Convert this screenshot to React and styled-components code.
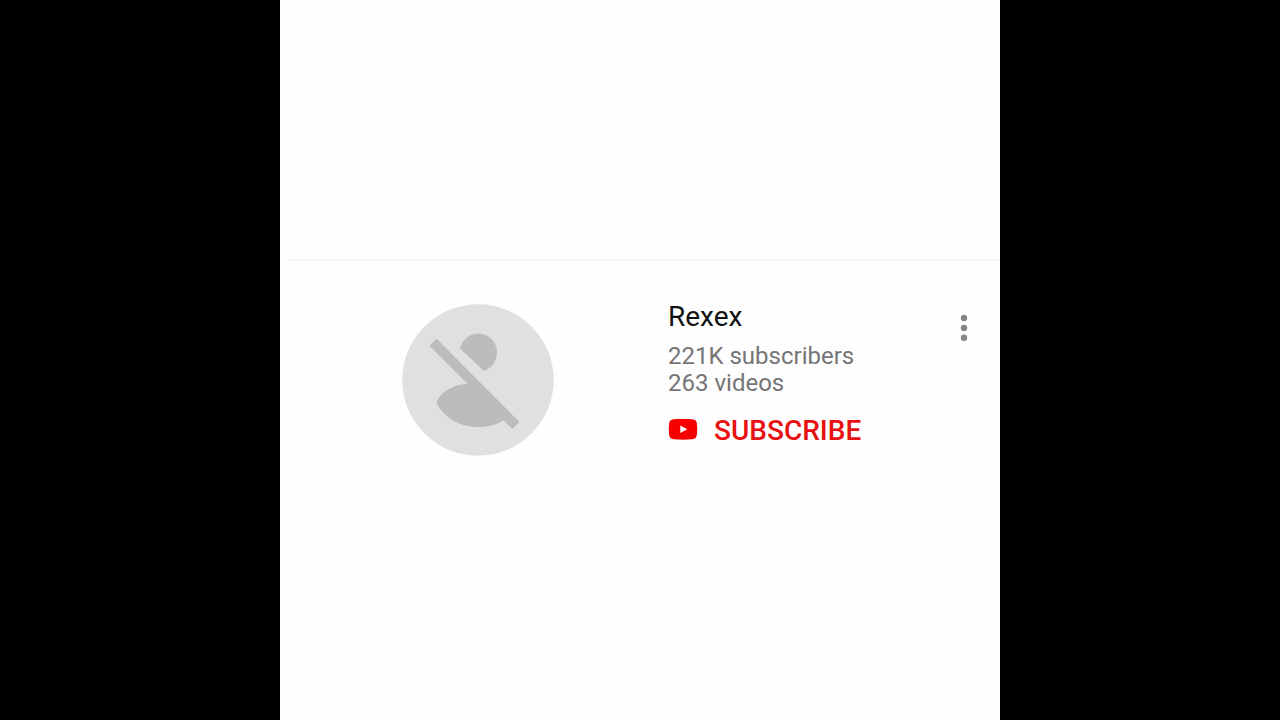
import React from 'react';
import styled, { createGlobalStyle } from 'styled-components';

const GlobalStyle = createGlobalStyle`
  * {
    box-sizing: border-box;
  }

  body {
    margin: 0;
    background-color: #000;
    font-family: Roboto, "Liberation Sans", sans-serif;
  }
`;

// black bars on both sides, square screen in the middle
const Stage = styled.div`
  display: flex;
  justify-content: center;
  min-height: 100vh;
`;

const Screen = styled.main`
  display: flex;
  flex-direction: column;
  width: 100vh;
  max-width: 100%;
  padding-top: 36vh;
  background-color: #fefefe;
`;

const Divider = styled.hr`
  width: auto;
  height: 2px;
  margin: 0 2px 0 10px;
  border: 0;
  background-color: #f5f5f5;
`;

const ChannelRow = styled.article`
  display: grid;
  grid-template-columns: calc(50% + 28px) 1fr 72px;
  padding-top: 43px;
`;

const AvatarCell = styled.div`
  display: flex;
  justify-content: center;
  padding-left: 8px;
`;

const ChannelInfo = styled.div`
  display: flex;
  flex-direction: column;
  align-items: flex-start;
`;

const ChannelName = styled.h2`
  margin: 0;
  padding-bottom: 13px;
  color: #111;
  font-size: 28px;
  font-weight: 400;
  line-height: 26px;
`;

const Meta = styled.p`
  margin: 0;
  color: #757575;
  font-size: 24px;
  line-height: 27px;
`;

const SubscribeButton = styled.button`
  display: flex;
  align-items: center;
  gap: 16px;
  margin-top: 18px;
  padding: 0;
  border: 0;
  background: none;
  color: #e81010;
  font-family: inherit;
  font-size: 28px;
  font-weight: 500;
  line-height: 32px;
  text-transform: uppercase;
  cursor: pointer;
`;

const MenuButton = styled.button`
  display: flex;
  justify-content: center;
  align-self: start;
  padding: 10px 0;
  border: 0;
  background: none;
  cursor: pointer;
`;

const Avatar = () => (
  <svg width="152" height="152" viewBox="0 0 152 152" aria-hidden="true">
    <circle cx="76" cy="76" r="75.7" fill="#e0e0e0" />
    <g fill="#bcbcbc">
      <path d="M58 44.3C60 35.8 67.3 29.4 76.3 29.4C86.6 29.4 95 37.8 95 48.1C95 57 89.5 64.8 81.7 67Z" />
      <path d="M34.7 34.7L117.3 118L110.3 125L101.8 116.4C93.5 121 85 123 75.3 123C59 123 42.5 114.5 34.7 99.5C35.5 90.5 50 80.4 65.3 79.7L27.3 41.7Z" />
    </g>
  </svg>
);

const PlayLogo = () => (
  <svg width="30" height="24" viewBox="0 0 30 24" aria-hidden="true">
    <path
      fill="#f80000"
      d="M5.5 .2Q15 -.4 24.5 .2Q28.4 .7 28.8 4Q29.6 10 28.8 16Q28.4 19.8 24.5 20.3Q15 21 5.5 20.3Q1.6 19.8 1.2 16Q.4 10 1.2 4Q1.6 .7 5.5 .2Z"
    />
    <path fill="#fff" d="M12.3 6.6L19.3 10.3L12.3 14Z" />
  </svg>
);

const Dots = () => (
  <svg width="8" height="28" viewBox="0 0 8 28" aria-hidden="true">
    <g fill="#858585">
      <circle cx="4" cy="4" r="3.2" />
      <circle cx="4" cy="13.9" r="3.2" />
      <circle cx="4" cy="23.8" r="3.2" />
    </g>
  </svg>
);

const App = () => {
  return (
    <>
      <GlobalStyle />
      <Stage>
        <Screen>
          <Divider />
          <ChannelRow>
            <AvatarCell>
              <Avatar />
            </AvatarCell>

            <ChannelInfo>
              <ChannelName>Rexex</ChannelName>
              <Meta>221K subscribers</Meta>
              <Meta>263 videos</Meta>
              <SubscribeButton type="button">
                <PlayLogo />
                Subscribe
              </SubscribeButton>
            </ChannelInfo>

            <MenuButton type="button" aria-label="More options">
              <Dots />
            </MenuButton>
          </ChannelRow>
        </Screen>
      </Stage>
    </>
  );
};

export default App;
